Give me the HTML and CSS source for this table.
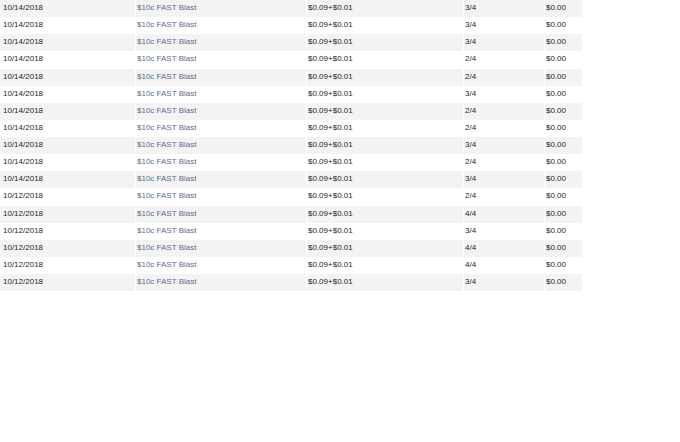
FILE: index.html
```html
<!DOCTYPE html>
<html>
<head>
<meta charset="utf-8">
<link rel="stylesheet" href="styles.css">
</head>
<body>
<table class="grid">
<colgroup>
<col class="c1"><col class="c2"><col class="c3"><col class="c4"><col class="c5">
</colgroup>
<tbody>
<tr><td>10/14/2018</td><td><a class="lnk">$10c FAST Blast</a></td><td>$0.09+$0.01</td><td>3/4</td><td>$0.00</td></tr>
<tr><td>10/14/2018</td><td><a class="lnk">$10c FAST Blast</a></td><td>$0.09+$0.01</td><td>3/4</td><td>$0.00</td></tr>
<tr><td>10/14/2018</td><td><a class="lnk">$10c FAST Blast</a></td><td>$0.09+$0.01</td><td>3/4</td><td>$0.00</td></tr>
<tr><td>10/14/2018</td><td><a class="lnk">$10c FAST Blast</a></td><td>$0.09+$0.01</td><td>2/4</td><td>$0.00</td></tr>
<tr><td>10/14/2018</td><td><a class="lnk">$10c FAST Blast</a></td><td>$0.09+$0.01</td><td>2/4</td><td>$0.00</td></tr>
<tr><td>10/14/2018</td><td><a class="lnk">$10c FAST Blast</a></td><td>$0.09+$0.01</td><td>3/4</td><td>$0.00</td></tr>
<tr><td>10/14/2018</td><td><a class="lnk">$10c FAST Blast</a></td><td>$0.09+$0.01</td><td>2/4</td><td>$0.00</td></tr>
<tr><td>10/14/2018</td><td><a class="lnk">$10c FAST Blast</a></td><td>$0.09+$0.01</td><td>2/4</td><td>$0.00</td></tr>
<tr><td>10/14/2018</td><td><a class="lnk">$10c FAST Blast</a></td><td>$0.09+$0.01</td><td>3/4</td><td>$0.00</td></tr>
<tr><td>10/14/2018</td><td><a class="lnk">$10c FAST Blast</a></td><td>$0.09+$0.01</td><td>2/4</td><td>$0.00</td></tr>
<tr><td>10/14/2018</td><td><a class="lnk">$10c FAST Blast</a></td><td>$0.09+$0.01</td><td>3/4</td><td>$0.00</td></tr>
<tr><td>10/12/2018</td><td><a class="lnk">$10c FAST Blast</a></td><td>$0.09+$0.01</td><td>2/4</td><td>$0.00</td></tr>
<tr><td>10/12/2018</td><td><a class="lnk">$10c FAST Blast</a></td><td>$0.09+$0.01</td><td>4/4</td><td>$0.00</td></tr>
<tr><td>10/12/2018</td><td><a class="lnk">$10c FAST Blast</a></td><td>$0.09+$0.01</td><td>3/4</td><td>$0.00</td></tr>
<tr><td>10/12/2018</td><td><a class="lnk">$10c FAST Blast</a></td><td>$0.09+$0.01</td><td>4/4</td><td>$0.00</td></tr>
<tr><td>10/12/2018</td><td><a class="lnk">$10c FAST Blast</a></td><td>$0.09+$0.01</td><td>4/4</td><td>$0.00</td></tr>
<tr><td>10/12/2018</td><td><a class="lnk">$10c FAST Blast</a></td><td>$0.09+$0.01</td><td>3/4</td><td>$0.00</td></tr>
</tbody>
</table>
</body>
</html>
```
FILE: styles.css
```css
html, body {
  margin: 0;
  padding: 0;
  background: #fff;
}
.grid {
  width: 582px;
  table-layout: fixed;
  border-collapse: separate;
  border-spacing: 0;
  font-family: "Liberation Sans", Arial, sans-serif;
  font-size: 8px;
  color: #1e1e1e;
}
.c1 { width: 135px; }
.c2 { width: 171px; }
.c3 { width: 157px; }
.c4 { width: 81px; }
.c5 { width: 38px; }
.grid tr {
  height: 17.125px;
}
.grid td {
  padding: 0 0 0 1px;
  line-height: 16px;
  white-space: nowrap;
  overflow: hidden;
  vertical-align: top;
}
.grid td:first-child {
  padding-left: 3px;
}
.grid td + td {
  border-left: 1px solid #fff;
}
.grid tr:nth-child(odd) td {
  background: #f3f3f3;
}
.lnk {
  color: #5a6b93;
  text-decoration: none;
}
```
